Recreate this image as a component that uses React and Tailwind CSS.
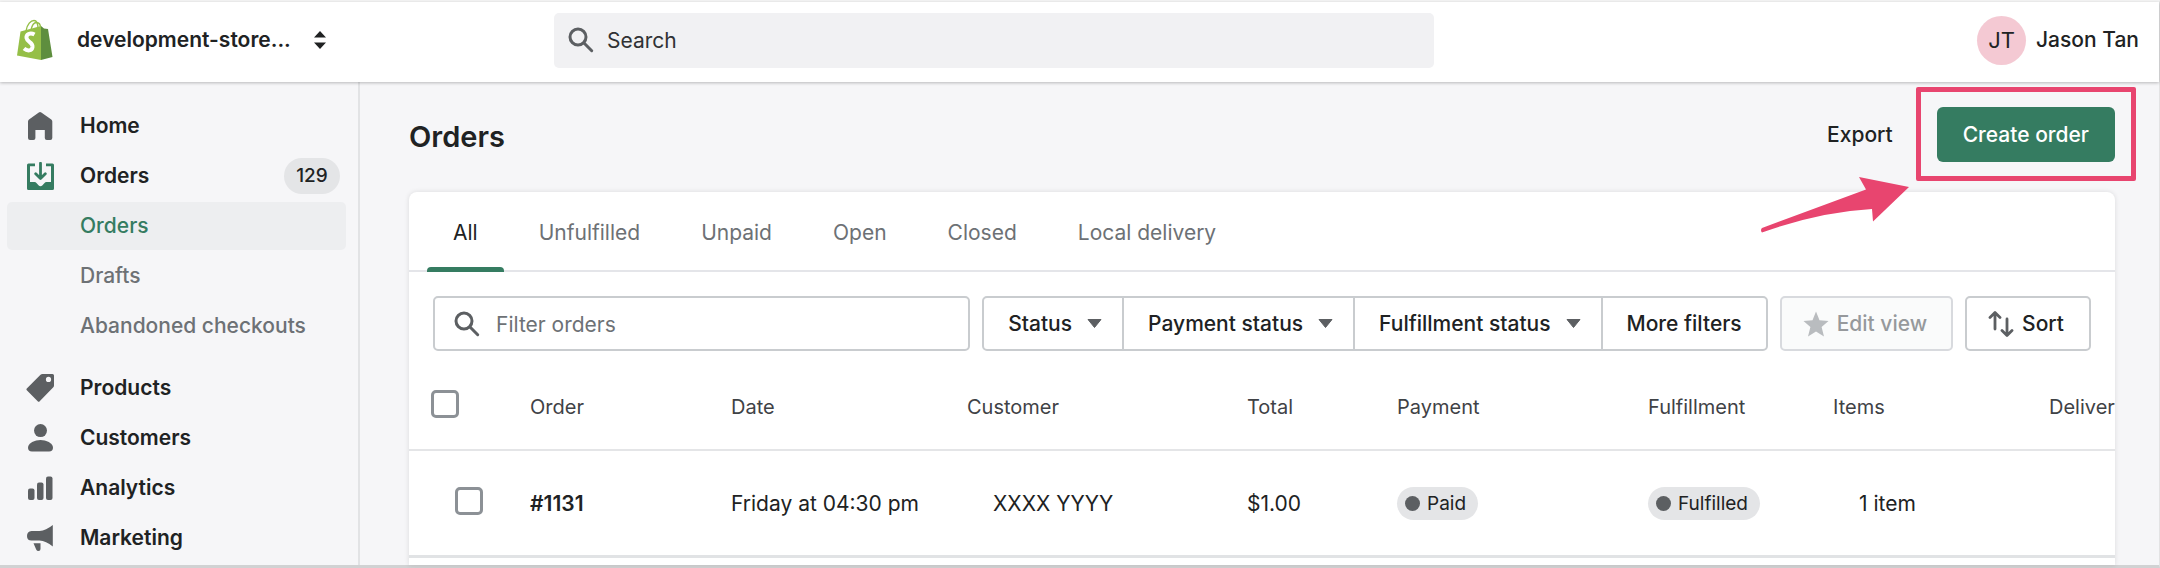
const NAV = [
  { label: 'Products', icon: 'tag' },
  { label: 'Customers', icon: 'person' },
  { label: 'Analytics', icon: 'bars' },
  { label: 'Marketing', icon: 'horn' },
];

function NavIcon({ name }) {
  return (
    <svg viewBox="0 0 28 28" className="h-7 w-7 shrink-0" fill="currentColor" aria-hidden="true">
      {name === 'home' && (
        <path d="M12.8.5Q14-.4 15.300.5L25.300 7.400Q26.300 8.200 26.300 9.600V26Q26.300 28 24.300 28H20.800Q18.800 28 18.800 26V18H9.400V26Q9.400 28 7.400 28H4Q2 28 2 26V9.600Q2 8.200 3 7.400Z" />
      )}
      {name === 'inbox' && (
        <>
          <path d="M9 1.5H2.5Q1 1.5 1 3V26.5Q1 28 2.5 28H26.5Q28 28 28 26.5V3Q28 1.5 26.5 1.5H20V4.3H25V20H20.5Q19.3 20 18.3 21.3L16.500 23.300Q14.500 25 12.500 23.300L10.700 21.300Q9.700 20 8.500 20H4V4.300H9Z" />
          <path d="M14.5 1.200V16M9.700 11.700 14.500 16.500 19.300 11.700" fill="none" stroke="currentColor" strokeWidth="2.800" strokeLinecap="round" strokeLinejoin="round" />
        </>
      )}
      {name === 'tag' && (
        <path fillRule="evenodd" d="M16.5 0H26.5Q28 0 28 1.5V11.5Q28 12.5 27.3 13.2L13.7 27.2Q12.7 28.2 11.7 27.2L.8 16.3Q0 15.3 .8 14.5L14.5 .7Q15.3 0 16.5 0ZM22.5 2.8A2.6 2.6 0 1 0 22.5 8 2.6 2.6 0 1 0 22.5 2.8Z" />
      )}
      {name === 'person' && (
        <>
          <circle cx="14.5" cy="6.6" r="6.5" />
          <path d="M14.5 16C20 16 27 19 27 23.5Q27 27.5 23 27.5H6Q2 27.5 2 23.5C2 19 9 16 14.5 16Z" />
        </>
      )}
      {name === 'bars' && (
        <>
          <rect x="2" y="14.5" width="6.5" height="11.5" rx="2" />
          <rect x="11" y="8.5" width="6.5" height="17.5" rx="2" />
          <rect x="20" y="2.5" width="6.5" height="23.5" rx="2" />
        </>
      )}
      {name === 'horn' && (
        <>
          <path d="M26.8 1V22.5Q20 17 13.5 16.5H5.5Q1 16.5 1 12T5.5 7H13.5Q20 6.5 26.8 1Z" />
          <path d="M7.5 19.3H14.5V25Q14.5 27 12.5 27 10.8 27 10.2 25.5Z" />
        </>
      )}
    </svg>
  );
}

function SearchIcon() {
  return (
    <svg viewBox="0 0 26 26" className="h-[26px] w-[26px] shrink-0 text-[#5c5f62]" fill="none" stroke="currentColor" strokeWidth="3" strokeLinecap="round" aria-hidden="true">
      <circle cx="10" cy="10" r="8" />
      <path d="M16 16 23.7 23.7" />
    </svg>
  );
}

function Caret() {
  return (
    <svg viewBox="0 0 15 9" className="h-[9px] w-[15px]" aria-hidden="true">
      <path d="M1 .5H14L7.5 8.5Z" fill="#5c5f62" stroke="#5c5f62" strokeLinejoin="round" />
    </svg>
  );
}

function Logo() {
  return (
    <svg viewBox="0 0 36 42" className="h-[42px] w-9 shrink-0" role="img" aria-label="Shopify">
      <path d="M9 12C10 5 14 1.5 17 1.5 20 1.5 21 6 21 10M14 11C15 6 17 3.500 19.500 3.500 22 3.500 23.500 6 23.500 9" fill="none" stroke="#95bf47" strokeWidth="1.400" />
      <path d="M3.5 12.500 24 7V41L0 36.500Z" fill="#95bf47" />
      <path d="M24 7 27 9.500 31 10 35.500 38 24 41Z" fill="#5e8e3e" />
      <path d="M17.500 15.500C13 13 9 15.500 9.500 19 10 23 16 23 15.500 28 15 32 10.500 32.500 7 29.500" fill="none" stroke="#fff" strokeWidth="4" />
    </svg>
  );
}

function Check({ label }) {
  return <input type="checkbox" aria-label={label} className="block h-7 w-7 appearance-none rounded-[5px] border-[3px] border-[#8c9196] bg-white" />;
}

function Badge({ children }) {
  return (
    <span className="inline-flex h-[33px] items-center gap-[7px] rounded-full bg-[#e4e5e7] pr-3 pl-2 text-[19px]">
      <span className="h-[15px] w-[15px] rounded-full bg-[#5c5f62]" />
      {children}
    </span>
  );
}

const TABS = ['All', 'Unfulfilled', 'Unpaid', 'Open', 'Closed', 'Local delivery'];
const FILTERS = ['Status', 'Payment status', 'Fulfillment status'];
const COLUMNS = ['Order', 'Date', 'Customer', 'Total', 'Payment', 'Fulfillment', 'Items', 'Delivery method'];

export default function App() {
  return (
    <div className="flex min-h-screen flex-col border-t-2 border-r border-b-[3px] border-t-[#f4f4f4] border-r-[#e3e3e4] border-b-[#d1d2d3] bg-[#f6f6f8] font-['Inter','Liberation_Sans',sans-serif] text-[21px] leading-7 text-[#202223]">
      <header className="relative z-10 flex h-20 items-center bg-white shadow-[0_1px_3px_rgba(0,0,0,0.25)]">
        <div className="flex w-[554px] shrink-0 items-center pb-1 pl-[17px]">
          <Logo />
          <button className="ml-6 flex items-center gap-[22px] font-semibold" aria-label="Switch store">
            development-store...
            <svg viewBox="0 0 14 20" className="h-5 w-3.5" aria-hidden="true">
              <path d="M7 1 13 7.5H1ZM7 19 13 12.5H1Z" fill="#202223" />
            </svg>
          </button>
        </div>
        <label className="mb-1 flex h-[55px] max-w-[880px] flex-1 items-center gap-[13px] rounded-[5px] bg-[#f1f1f3] pl-[14px]">
          <SearchIcon />
          <input type="search" placeholder="Search" aria-label="Search" className="min-w-0 flex-1 bg-transparent pt-0.5 outline-none placeholder:text-[#303234]" />
        </label>
        <button className="mr-5 mb-1 ml-auto flex items-center gap-2.5 font-medium">
          <span className="flex h-[49px] w-[49px] items-center justify-center rounded-full bg-[#f4c9d3] text-[22px] font-normal">JT</span>
          Jason Tan
        </button>
      </header>

      <div className="flex flex-1">
        <nav className="w-[360px] shrink-0 border-r-2 border-[#e2e3e5] pt-[19px] font-semibold text-[#202223]">
          <a href="#home" className="flex h-[50px] items-center gap-[26px] pl-[26px]">
            <span className="text-[#5c5f62]"><NavIcon name="home" /></span>Home
          </a>
          <a href="#orders" className="flex h-[50px] items-center gap-[26px] pr-[18px] pl-[26px]">
            <span className="text-[#357c61]"><NavIcon name="inbox" /></span>Orders
            <span className="ml-auto flex h-9 w-14 items-center justify-center rounded-full bg-[#e4e5e7] text-[19px] font-medium">129</span>
          </a>
          <div className="font-medium text-[#6d7175]">
            <div className="flex h-[50px] items-center pr-3 pl-[7px]">
              <a href="#all-orders" aria-current="page" className="flex h-12 flex-1 items-center rounded-[5px] bg-[#edeef0] pl-[73px] text-[#357c61]">Orders</a>
            </div>
            <a href="#drafts" className="flex h-[50px] items-center pl-20">Drafts</a>
            <a href="#abandoned" className="flex h-[50px] items-center pl-20">Abandoned checkouts</a>
          </div>
          <div className="pt-3">
            {NAV.map((n) => (
              <a key={n.label} href={`#${n.label}`} className="flex h-[50px] items-center gap-[26px] pl-[26px]">
                <span className="text-[#5c5f62]"><NavIcon name={n.icon} /></span>{n.label}
              </a>
            ))}
          </div>
        </nav>

        <main className="flex min-w-0 flex-1 flex-col pr-11 pl-[49px]">
          <div className="flex h-[110px] shrink-0 items-center justify-between">
            <h1 className="text-[29px] font-semibold">Orders</h1>
            <div className="flex items-center gap-11 pb-[5px] font-medium">
              <button>Export</button>
              <div className="relative">
                <button className="block h-[55px] rounded-[6px] bg-[#357c61] px-[26px] text-white">Create order</button>
                <div className="pointer-events-none absolute -inset-x-[21px] -top-5 -bottom-[19px] rounded-[2px] border-[5px] border-[#e8456f]" />
                <svg viewBox="0 0 152 60" className="pointer-events-none absolute top-[67px] right-[204px] h-[60px] w-[152px]" aria-hidden="true">
                  <path d="M150 13 100 3 107 15.5 3 54Q1 56 3 58.5 60 38 113 35L114 47.5Z" fill="#e8456f" />
                </svg>
              </div>
            </div>
          </div>

          <section className="flex-1 overflow-hidden rounded-t-[8px] bg-white shadow-[0_0_5px_rgba(23,24,24,0.12)]">
            <div role="tablist" className="flex h-20 gap-[9px] border-b-2 border-[#e4e5e9] pl-[18px] text-[#6d7175]">
              {TABS.map((t, i) => (
                <button key={t} role="tab" aria-selected={i === 0} className={i === 0 ? 'relative px-[26px] pt-[3px] text-[#202223]' : 'px-[26px] pt-[3px]'}>
                  {t}
                  {i === 0 && <span className="absolute inset-x-0 -bottom-0.5 h-[5px] rounded-t-[4px] bg-[#357c61]" />}
                </button>
              ))}
            </div>

            <div className="flex h-[103px] items-center gap-3 pr-6 pl-6 font-medium">
              <label className="flex h-[55px] min-w-0 flex-1 items-center gap-4 rounded-[5px] border-2 border-[#c9cccf] pl-[19px]">
                <SearchIcon />
                <input type="text" placeholder="Filter orders" aria-label="Filter orders" className="min-w-0 flex-1 bg-transparent pt-0.5 font-normal outline-none placeholder:text-[#6d7175]" />
              </label>
              <div className="flex h-[55px] divide-x-2 divide-[#c9cccf] rounded-[5px] border-2 border-[#c9cccf]">
                {FILTERS.map((f) => (
                  <button key={f} className="flex items-center gap-[15px] pr-5 pl-6">{f}<Caret /></button>
                ))}
                <button className="px-6">More filters</button>
              </div>
              <button disabled className="flex h-[55px] items-center gap-2 rounded-[5px] border-2 border-[#d8dade] bg-[#fafbfb] pr-6 pl-[21px] text-[#96999c]">
                <svg viewBox="0 0 26 26" className="h-[26px] w-[26px]" aria-hidden="true">
                  <path d="M13 .5 16.500 9.300 25.500 10 18.600 15.900 21 25.500 13 20.500 5 25.500 7.400 15.900.5 10 9.500 9.300Z" fill="#b9bcbf" />
                </svg>
                Edit view
              </button>
              <button className="flex h-[55px] items-center gap-2 rounded-[5px] border-2 border-[#c9cccf] pr-[25px] pl-[21px]">
                <svg viewBox="0 0 26 26" className="h-[26px] w-[26px]" fill="none" stroke="#5c5f62" strokeWidth="2.800" strokeLinecap="round" strokeLinejoin="round" aria-hidden="true">
                  <path d="M7 18V2M2 6.5 7 1.500 12 6.500M19 8V24M14 19.500 19 24.500 24 19.500" />
                </svg>
                Sort
              </button>
            </div>

            <table className="w-[1950px] table-fixed text-left">
              <colgroup>
                <col className="w-[121px]" /><col className="w-[201px]" /><col className="w-[236px]" /><col className="w-[280px]" /><col className="w-[150px]" /><col className="w-[251px]" /><col className="w-[185px]" /><col className="w-[216px]" /><col />
              </colgroup>
              <thead>
                <tr className="h-[75px] border-b-2 border-[#e4e5e7] text-[20px] text-[#3f4246]">
                  <td className="pb-4 pl-[22px]"><Check label="Select all orders" /></td>
                  {COLUMNS.map((h) => (
                    <th key={h} scope="col" className="pb-2.5 font-normal">{h}</th>
                  ))}
                </tr>
              </thead>
              <tbody>
                <tr className="h-[106px] border-b-[3px] border-[#e1e3e5]">
                  <td className="pb-1 pl-[46px]"><Check label="Select order #1131" /></td>
                  <td className="pt-0.5 font-semibold">#1131</td>
                  <td className="pt-0.5">Friday at 04:30 pm</td>
                  <td className="pt-0.5 pl-[26px]">XXXX YYYY</td>
                  <td className="pt-0.5">$1.00</td>
                  <td className="pt-0.5"><Badge>Paid</Badge></td>
                  <td className="pt-0.5"><Badge>Fulfilled</Badge></td>
                  <td className="pt-0.5 pl-[26px]">1 item</td>
                  <td />
                </tr>
              </tbody>
            </table>
          </section>
        </main>
      </div>
    </div>
  );
}
